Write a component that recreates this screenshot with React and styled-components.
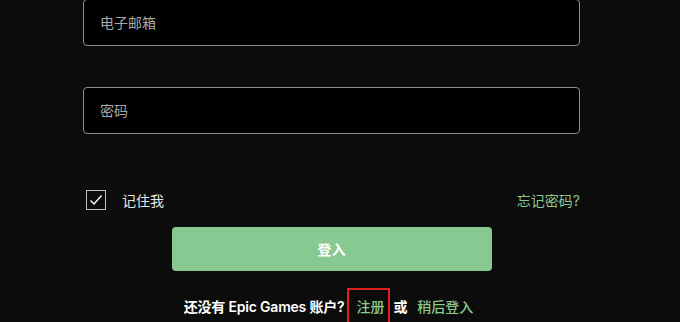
import React from 'react';
import styled, { createGlobalStyle } from 'styled-components';

const GlobalStyle = createGlobalStyle`
  html, body {
    margin: 0;
    padding: 0;
    background: #0c0c0c;
    overflow: hidden;
  }
  body {
    font-family: Inter, "Noto Sans CJK SC", sans-serif;
  }
`;

const Page = styled.div`
  width: 680px;
  height: 322px;
  overflow: hidden;
`;

const Form = styled.form`
  width: 497px;
  margin: -1px 0 0 83px;
  display: flex;
  flex-direction: column;
`;

const Field = styled.input`
  box-sizing: border-box;
  height: 47px;
  width: 100%;
  margin-bottom: ${p => p.$gap || 0}px;
  padding: 0 16px;
  background: #000;
  border: 1px solid #8d8d8d;
  border-radius: 4px;
  color: #fff;
  font-family: Inter, "Noto Sans CJK SC", sans-serif;
  font-size: 14px;
  outline: none;

  &::placeholder {
    color: #a9a9a9;
  }
`;

const OptionsRow = styled.div`
  display: flex;
  align-items: center;
  justify-content: space-between;
  margin-top: 56px;
  padding-left: 3px;
`;

const Remember = styled.label`
  display: flex;
  align-items: center;
  gap: 16px;
  color: #e6e6e6;
  font-size: 14px;
`;

const Box = styled.span`
  box-sizing: border-box;
  width: 20px;
  height: 20px;
  border: 1px solid #b9c4b9;
  display: flex;
  align-items: center;
  justify-content: center;
`;

const GreenLink = styled.a`
  color: #8cc98f;
  font-size: 14px;
  text-decoration: none;
  cursor: pointer;
`;

const Submit = styled.button`
  align-self: center;
  width: 320px;
  height: 44px;
  margin-top: 17px;
  border: none;
  border-radius: 4px;
  background: #88c991;
  color: #fff;
  font-family: Inter, "Noto Sans CJK SC", sans-serif;
  font-size: 14px;
  font-weight: 700;
`;

const Footer = styled.div`
  display: flex;
  align-items: center;
  justify-content: center;
  margin-top: 17px;
  padding-right: 6px;
  color: #fff;
  font-size: 14px;
  font-weight: 600;
  letter-spacing: -0.2px;
  white-space: pre;
`;

const Marked = styled.span`
  box-sizing: border-box;
  height: 36px;
  padding: 0 4px 0 7px;
  margin: 0 3px 0 3px;
  border: 2px solid #e3201f;
  display: flex;
  align-items: center;
`;

const FooterLink = styled(GreenLink)`
  font-weight: 500;
  letter-spacing: 0;
  margin-left: ${p => p.$ml || 0}px;
`;

export default function App() {
  return (
    <Page>
      <GlobalStyle />
      <Form onSubmit={e => e.preventDefault()}>
        <Field placeholder="电子邮箱" $gap={41} />
        <Field type="password" placeholder="密码" />
        <OptionsRow>
          <Remember>
            <Box>
              <svg width="14" height="12" viewBox="0 0 14 12" fill="none">
                <path d="M1.5 6.5 L5 10 L12.5 1.5" stroke="#fff" strokeWidth="1.4" />
              </svg>
            </Box>
            记住我
          </Remember>
          <GreenLink>忘记密码?</GreenLink>
        </OptionsRow>
        <Submit type="submit">登入</Submit>
        <Footer>
          还没有 Epic Games 账户?
          <Marked>
            <FooterLink>注册</FooterLink>
          </Marked>
          或
          <FooterLink $ml={10}>稍后登入</FooterLink>
        </Footer>
      </Form>
    </Page>
  );
}
